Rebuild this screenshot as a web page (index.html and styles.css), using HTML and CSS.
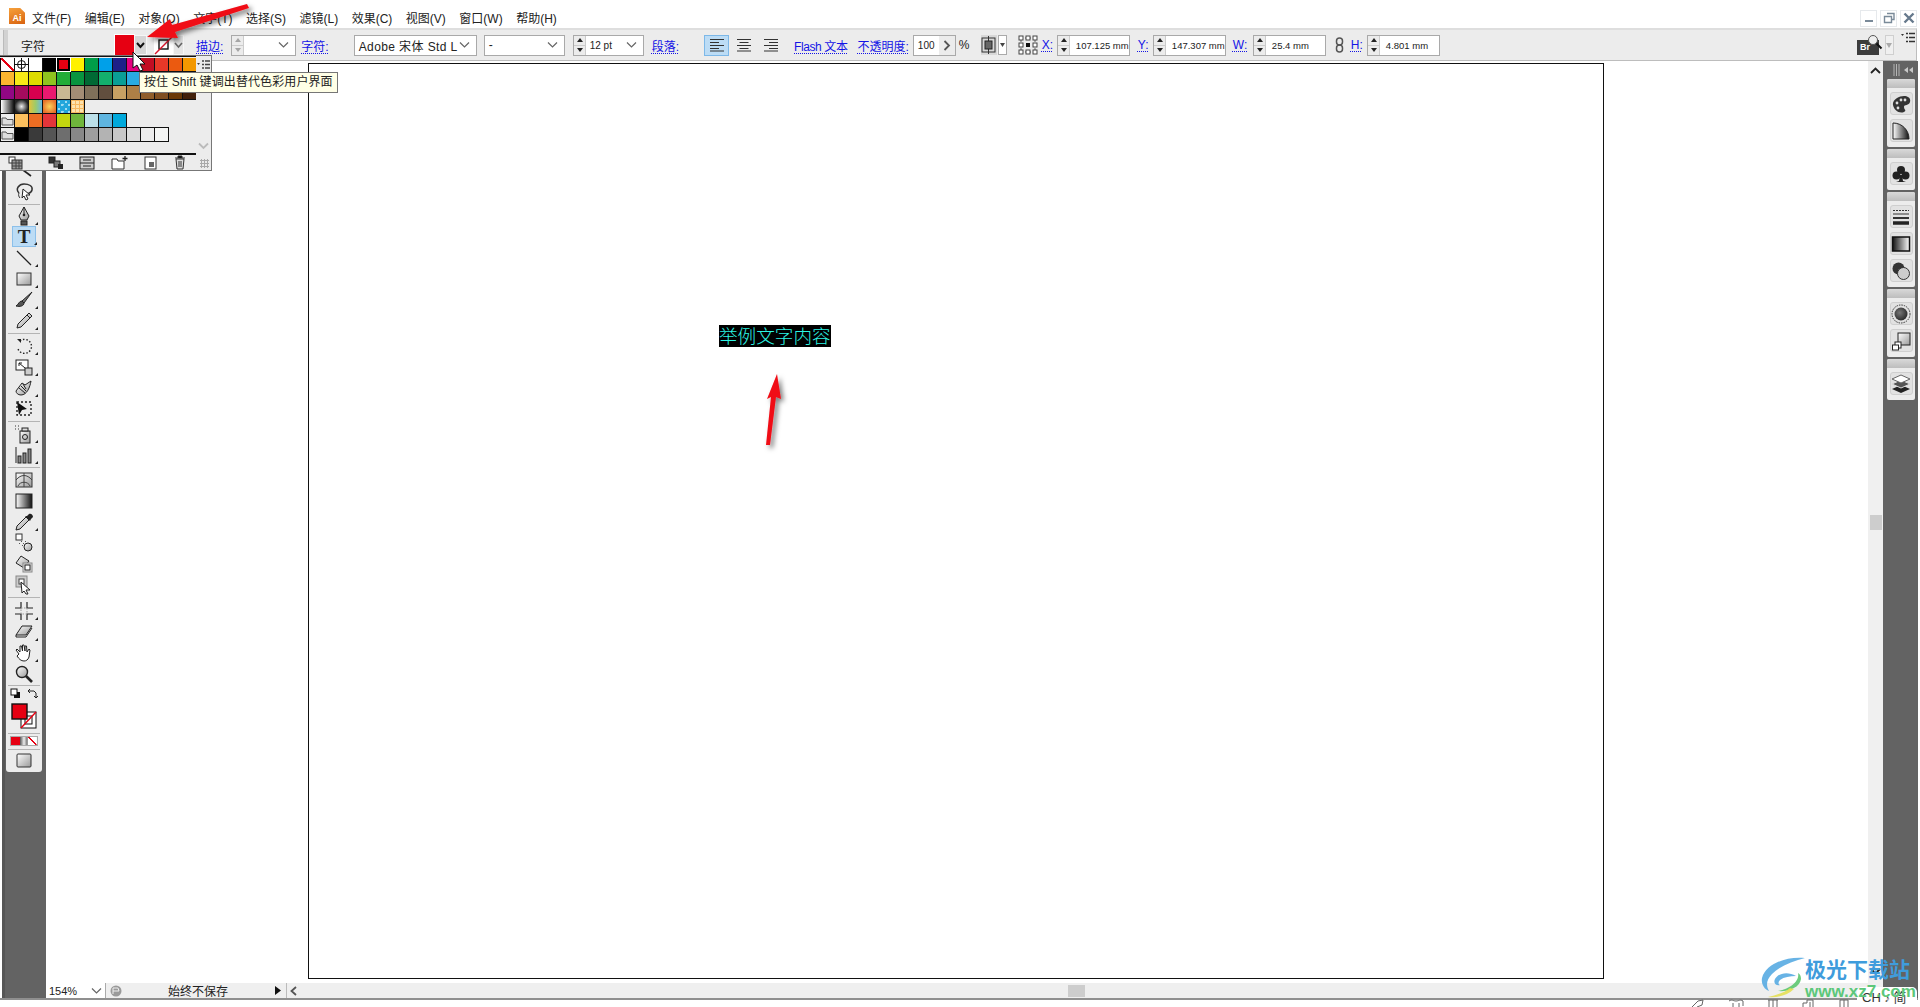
FILE: index.html
```html
<!doctype html>
<html lang="zh-CN">
  <head>
    <meta charset="utf-8" />
    <title>Adobe Illustrator</title>
    <link rel="stylesheet" href="styles.css">
  </head>

  <body>
    <svg class="defs" aria-hidden="true">
      <defs>
        <linearGradient id="g-soft" x1="0" y1="0" x2="1" y2="1">
          <stop offset="0" stop-color="#fff" /><stop offset="1" stop-color="#999" />
        </linearGradient>
        <linearGradient id="g-bw" x1="0" y1="0" x2="1" y2="0">
          <stop offset="0" stop-color="#fff" /><stop offset="1" stop-color="#111" />
        </linearGradient>
        <radialGradient id="g-ball" cx="0.4" cy="0.4" r="0.7">
          <stop offset="0" stop-color="#777" /><stop offset="1" stop-color="#222" />
        </radialGradient>
        <filter id="arrow-shadow" x="-40%" y="-40%" width="180%" height="180%">
          <feDropShadow dx="3" dy="3" stdDeviation="2.5" flood-color="#000" flood-opacity="0.5" />
        </filter>
      </defs>
    </svg>

    <!-- Title bar -->
    <header class="title-bar">
      <div class="app-icon">Ai</div>
      <nav class="menu">
        <span>文件(F)</span>
        <span>编辑(E)</span>
        <span>对象(O)</span>
        <span>文字(T)</span>
        <span>选择(S)</span>
        <span>滤镜(L)</span>
        <span>效果(C)</span>
        <span>视图(V)</span>
        <span>窗口(W)</span>
        <span>帮助(H)</span>
      </nav>
      <div class="win-buttons">
        <div class="win-btn"><svg width="16" height="16"><rect x="4" y="10" width="8" height="2" fill="#7a8a99" /></svg></div>
        <div class="win-btn"><svg width="16" height="16"><path d="M6 3.5h7v6h-2M3.5 6.5h7v6h-7z" fill="none" stroke="#7a8a99" stroke-width="1.4" /></svg></div>
        <div class="win-btn"><svg width="16" height="16"><path d="M3.5 3.5l9 9M12.5 3.5l-9 9" stroke="#66798c" stroke-width="2.4" /></svg></div>
      </div>
    </header>

    <!-- Control bar -->
    <section class="control-bar">
      <div class="grip"></div>
      <span class="selection-name">字符</span>
      <div class="fill-swatch"></div>
      <div class="mini-drop dark"><svg width="13" height="20"><path d="M3 8l3.5 4 3.5-4" fill="none" stroke="#111" stroke-width="2" /></svg></div>
      <div class="stroke-swatch">
        <svg width="19" height="20"><rect x="5" y="5" width="9" height="9" fill="#fff" stroke="#111" stroke-width="1.4" /><path d="M1 19L18 2" stroke="#d8142a" stroke-width="1.4" /></svg>
      </div>
      <div class="mini-drop"><svg width="11" height="20"><path d="M2 8l3.5 4 3.5-4" fill="none" stroke="#666" stroke-width="1.6" /></svg></div>

      <span class="link-label lbl-stroke">描边:</span>
      <div class="field stroke-field">
        <div class="spin faded"><i></i><i class="down"></i></div>
        <span class="field-text"></span>
        <svg class="chev" width="11" height="8"><path d="M1 1.5l4.5 4.5 4.5-4.5" fill="none" stroke="#666" stroke-width="1.2" /></svg>
      </div>
      <span class="link-label lbl-char">字符:</span>
      <div class="field font-field">
        <span class="field-text wide">Adobe 宋体 Std L</span>
        <svg class="chev" width="11" height="8"><path d="M1 1.5l4.5 4.5 4.5-4.5" fill="none" stroke="#666" stroke-width="1.2" /></svg>
      </div>
      <div class="field style-field">
        <span class="field-text">-</span>
        <svg class="chev" width="11" height="8"><path d="M1 1.5l4.5 4.5 4.5-4.5" fill="none" stroke="#666" stroke-width="1.2" /></svg>
      </div>
      <div class="field size-field">
        <div class="spin"><i></i><i class="down"></i></div>
        <span class="field-text small">12 pt</span>
        <svg class="chev" width="11" height="8"><path d="M1 1.5l4.5 4.5 4.5-4.5" fill="none" stroke="#666" stroke-width="1.2" /></svg>
      </div>

      <span class="link-label lbl-para">段落:</span>
      <div class="align-btn active first"><svg width="16" height="14"><path d="M1 1.5h14M1 4.5h9M1 7.5h14M1 10.5h9M1 13h14" stroke="#333" stroke-width="1.2" /></svg></div>
      <div class="align-btn"><svg width="16" height="14"><path d="M1 1.5h14M3.5 4.5h9M1 7.5h14M3.5 10.5h9M1 13h14" stroke="#333" stroke-width="1.2" /></svg></div>
      <div class="align-btn"><svg width="16" height="14"><path d="M1 1.5h14M6 4.5h9M1 7.5h14M6 10.5h9M1 13h14" stroke="#333" stroke-width="1.2" /></svg></div>

      <span class="link-label lbl-flash">Flash 文本</span>
      <span class="link-label lbl-opacity">不透明度:</span>
      <div class="field opacity-field">
        <span class="field-text small">100</span>
        <div class="opacity-arrow"><svg width="8" height="11"><path d="M1.5 1l4.5 4.5L1.5 10" fill="none" stroke="#555" stroke-width="1.8" /></svg></div>
      </div>
      <span class="percent">%</span>
      <div class="align-obj">
        <svg width="15" height="20"><path d="M7.5 1v18" stroke="#333" /><rect x="1" y="3" width="13" height="14" fill="none" stroke="#333" /><rect x="4" y="6" width="7" height="8" fill="#666" stroke="#222" /></svg>
      </div>
      <div class="mini-drop align-drop"><svg width="9" height="20"><path d="M2 8l2.5 4 2.5-4z" fill="#444" /></svg></div>
      <div class="ref-point">
        <svg width="20" height="20"><path d="M3 3h14v14H3z" fill="none" stroke="#666" stroke-dasharray="2 2" /><g fill="#fff" stroke="#444"><rect x="1" y="1" width="4" height="4" /><rect x="8" y="1" width="4" height="4" /><rect x="15" y="1" width="4" height="4" /><rect x="1" y="8" width="4" height="4" /><rect x="15" y="8" width="4" height="4" /><rect x="1" y="15" width="4" height="4" /><rect x="8" y="15" width="4" height="4" /><rect x="15" y="15" width="4" height="4" /></g><rect x="8" y="8" width="4" height="4" fill="#111" /></svg>
      </div>

      <span class="link-label lbl-x">X:</span>
      <div class="field num-field"><div class="spin"><i></i><i class="down"></i></div><span class="field-text num">107.125 mm</span></div>
      <span class="link-label lbl-y">Y:</span>
      <div class="field num-field"><div class="spin"><i></i><i class="down"></i></div><span class="field-text num">147.307 mm</span></div>
      <span class="link-label lbl-w">W:</span>
      <div class="field num-field"><div class="spin"><i></i><i class="down"></i></div><span class="field-text num">25.4 mm</span></div>
      <div class="chain"><svg width="9" height="16"><rect x="1.5" y="1" width="6" height="7" rx="3" fill="none" stroke="#555" stroke-width="1.5" /><rect x="1.5" y="8" width="6" height="7" rx="3" fill="none" stroke="#555" stroke-width="1.5" /></svg></div>
      <span class="link-label lbl-h">H:</span>
      <div class="field num-field"><div class="spin"><i></i><i class="down"></i></div><span class="field-text num">4.801 mm</span></div>

      <div class="bar-end">
        <div class="bridge">Br<svg width="16" height="16"><circle cx="6" cy="6" r="4.5" fill="#eee" stroke="#555" /><path d="M9.5 9.5l5 5" stroke="#111" stroke-width="2" /></svg></div>
        <div class="mini-drop bridge-drop"><svg width="8" height="20"><path d="M1 8l3 5 3-5z" fill="#aaa" /></svg></div>
        <div class="panel-menu"><svg width="14" height="12"><path d="M0 2h3L1.5 4z" fill="#333" /><path d="M5 1.5h9M5 5.5h9M5 9.5h9" stroke="#333" stroke-width="1.6" stroke-dasharray="2 1 8" /></svg></div>
      </div>
    </section>

    <!-- Workspace -->
    <div class="workspace">
      <aside class="tool-dock">
        <div class="tool-panel">
          <div class="tool"><svg width="20" height="20"><path d="M9 8l8 6" stroke="#222" stroke-width="1.6" /></svg></div>
          <div class="tool"><svg width="20" height="20"><g transform="translate(0 -2)"><path d="M5 12C1 8 5 3 10 3s9 2 8 6-6 4-9 3" fill="none" stroke="#333" stroke-width="1.5" /><path d="M9 8l7 6-4 0 2 4-2 1-2-4-2 2z" fill="#fff" stroke="#222" /><path d="M5 12c-1 2 0 4 1 5" fill="none" stroke="#333" /></g></svg></div>
          <div class="sep thin"></div>
          <div class="tool more"><svg width="20" height="20"><path d="M10 1l5 9-2 4H7l-2-4z" fill="url(#g-soft)" stroke="#222" /><path d="M10 1v7" stroke="#222" /><circle cx="10" cy="9" r="1.3" fill="#222" /><rect x="7" y="15" width="6" height="4" fill="#555" stroke="#222" /></svg></div>
          <div class="tool selected more"><span class="type-t">T</span></div>
          <div class="tool more"><svg width="20" height="20"><path d="M3 3l14 14" stroke="#222" stroke-width="1.3" /></svg></div>
          <div class="tool more"><svg width="20" height="20"><rect x="3" y="4" width="14" height="12" fill="url(#g-soft)" stroke="#333" /></svg></div>
          <div class="tool more"><svg width="20" height="20"><path d="M18 2L8 11l2 2z" fill="#777" stroke="#222" /><path d="M8 11c-3 0-3 3-6 5 4 1 8 0 8-3z" fill="#555" stroke="#222" /></svg></div>
          <div class="tool more"><svg width="20" height="20"><path d="M15 2l3 3L7 16l-4 1 1-4z" fill="url(#g-soft)" stroke="#222" /><path d="M13 4l3 3" stroke="#222" /></svg></div>
          <div class="sep"></div>
          <div class="tool more"><svg width="20" height="20"><path d="M6 5a7 7 0 1 1-2 8" fill="none" stroke="#222" stroke-width="1.4" stroke-dasharray="1.5 1.8" /><path d="M3 3l4 0 0 4z" fill="#222" /></svg></div>
          <div class="tool more"><svg width="20" height="20"><rect x="2" y="3" width="12" height="10" fill="#fff" stroke="#222" /><rect x="11" y="11" width="7" height="7" fill="#ccc" stroke="#222" /><path d="M5 6l6 5M5 6h3M5 6v3" stroke="#222" /></svg></div>
          <div class="tool more"><svg width="20" height="20"><path d="M17 3c-1 6-4 14-10 14-3 0-5-2-5-4l6-8 3 2z" fill="url(#g-soft)" stroke="#222" /><path d="M5 10l6 5M7 8l5 5M9 6l3 5" stroke="#222" /></svg></div>
          <div class="tool"><svg width="20" height="20"><path d="M3 3h14v13H3z" fill="none" stroke="#222" stroke-width="1.4" stroke-dasharray="2 2" /><path d="M3 3l10 7-5 1-3 5z" fill="#111" /></svg></div>
          <div class="sep"></div>
          <div class="tool more"><svg width="20" height="20"><rect x="6" y="7" width="10" height="12" fill="url(#g-soft)" stroke="#222" /><circle cx="11" cy="13" r="2.5" fill="none" stroke="#222" /><rect x="8" y="4" width="6" height="3" fill="#ddd" stroke="#222" /><path d="M1 2h1M4 2h1M1 5h1M4 5h1" stroke="#333" /></svg></div>
          <div class="tool more"><svg width="20" height="20"><path d="M2 2v16" stroke="#222" /><rect x="4" y="11" width="3" height="7" fill="#888" stroke="#222" /><rect x="9" y="8" width="3" height="10" fill="#888" stroke="#222" /><rect x="14" y="4" width="3" height="14" fill="#888" stroke="#222" /></svg></div>
          <div class="sep"></div>
          <div class="tool"><svg width="20" height="20"><rect x="2" y="3" width="16" height="14" fill="url(#g-soft)" stroke="#333" /><path d="M2 10c5-6 11-6 16 0M10 3v14M4 16c2-5 10-5 12 0" fill="none" stroke="#444" /></svg></div>
          <div class="tool"><svg width="20" height="20"><rect x="2" y="3" width="16" height="14" fill="url(#g-bw)" stroke="#222" /></svg></div>
          <div class="tool more"><svg width="20" height="20"><path d="M12 5l3 3-9 9-4 1 1-4z" fill="url(#g-soft)" stroke="#222" /><path d="M11 4l5 5 1-2 2-2c0-2-2-4-4-3l-2 2z" fill="#222" /></svg></div>
          <div class="tool"><svg width="20" height="20"><rect x="2" y="1" width="6" height="6" fill="#fff" stroke="#333" /><circle cx="14" cy="14" r="4" fill="url(#g-soft)" stroke="#222" /><path d="M7 8l1 1M9 10l1 1M5 10l1 1M11 8l1 1M8 12l1 1" stroke="#555" /></svg></div>
          <div class="tool"><svg width="20" height="20"><path d="M7 2l8 5-5 7-8-5z" fill="url(#g-soft)" stroke="#222" /><rect x="9" y="9" width="9" height="9" fill="#ddd" stroke="#888" /><rect x="11" y="11" width="5" height="5" fill="#fff" stroke="#222" /></svg></div>
          <div class="tool"><svg width="20" height="20"><rect x="2" y="1" width="11" height="11" fill="#ccc" stroke="#888" /><rect x="5" y="4" width="5" height="5" fill="#fff" stroke="#444" /><path d="M7 7l9 8-4 0 2 4-2 0-2-3-2 2z" fill="#fff" stroke="#222" /></svg></div>
          <div class="sep wide"></div>
          <div class="tool more"><svg width="20" height="20"><path d="M7 1v6H1M13 1v6h6M7 19v-6H1M13 19v-6h6" fill="none" stroke="#222" stroke-width="1.2" /><rect x="7" y="7" width="6" height="6" fill="none" stroke="#999" stroke-dasharray="1.5 1.5" /></svg></div>
          <div class="tool more"><svg width="20" height="20"><path d="M8 4h10l-6 9H2z" fill="url(#g-soft)" stroke="#222" /><path d="M2 13l0 2h10l6-9" fill="none" stroke="#222" /></svg></div>
          <div class="tool more"><svg width="20" height="20"><path d="M5 11L2 7l1-1 3 3V3h1.5l1 5V2h1.5l1 6V3h1.5l.5 6 2-3 1 1-1 7c-1 3-3 4-5 4-3 0-5-2-7-5z" fill="#fff" stroke="#222" /></svg></div>
          <div class="tool"><svg width="20" height="20"><circle cx="8" cy="8" r="5.5" fill="url(#g-soft)" stroke="#222" stroke-width="1.4" /><path d="M12 12l6 6" stroke="#222" stroke-width="2.6" /></svg></div>
          <div class="sep thin"></div>

          <div class="color-mini">
            <svg width="11" height="11"><rect x="4" y="4" width="6" height="6" fill="#111" /><rect x="1" y="1" width="6" height="6" fill="#fff" stroke="#111" /></svg>
            <svg width="11" height="11"><path d="M1 3h6l2 2v5M9 10L7 8M9 10l2-2M1 3l2-2M1 3l2 2" fill="none" stroke="#222" /></svg>
          </div>
          <div class="fill-stroke">
            <svg width="26" height="26">
              <rect x="10" y="9" width="15" height="16" fill="#fff" stroke="#111" />
              <rect x="14" y="13" width="7" height="8" fill="none" stroke="#111" />
              <path d="M10 25L25 9" stroke="#e60012" stroke-width="1.5" />
              <rect x="1" y="1" width="15" height="15" fill="#e60012" stroke="#111" stroke-width="1.4" />
            </svg>
          </div>
          <div class="sep mode-sep"></div>
          <div class="color-modes"><i class="mode-red"></i><i class="mode-grad"></i><i class="mode-none"></i></div>
          <div class="sep mode-sep last"></div>
          <div class="tool"><svg width="20" height="20"><rect x="3" y="3" width="14" height="13" rx="1" fill="url(#g-soft)" stroke="#333" /></svg></div>
        </div>
      </aside>

      <div class="center-col">
        <div class="canvas-row">
          <main class="canvas">
            <div class="artboard">
              <span class="sample-text">举例文字内容</span>
            </div>
          </main>
          <div class="v-scroll">
            <svg width="11" height="7"><path d="M1 6l4.5-4.5L10 6" fill="none" stroke="#222" stroke-width="1.8" /></svg>
            <div class="v-thumb"></div>
            <svg width="11" height="7"><path d="M1 1l4.5 4.5L10 1" fill="none" stroke="#222" stroke-width="1.8" /></svg>
          </div>
        </div>
        <footer class="status-bar">
          <div class="zoom-select">
            <span>154%</span>
            <svg width="11" height="8"><path d="M1 1.5l4.5 4.5 4.5-4.5" fill="none" stroke="#666" stroke-width="1.2" /></svg>
          </div>
          <div class="artboard-icon"><svg width="12" height="12"><circle cx="6" cy="6" r="5.5" fill="#9a9a9a" /><path d="M3 9V3h5l1 3H3" fill="none" stroke="#eee" /></svg></div>
          <span class="status-text">始终不保存</span>
          <svg class="status-arrow" width="6" height="9"><path d="M0 0l6 4.5L0 9z" fill="#111" /></svg>
          <div class="h-track">
            <svg width="7" height="10"><path d="M6 1L1.5 5 6 9" fill="none" stroke="#555" stroke-width="1.8" /></svg>
            <div class="h-thumb"></div>
          </div>
        </footer>
      </div>

      <aside class="panel-dock">
        <div class="dock-head">
          <svg width="28" height="14"><path d="M7 1v12M9.5 1v12M12 1v12" stroke="#b5b5b5" /><path d="M21 4l-4 3 4 3zM26 4l-4 3 4 3z" fill="#c8c8c8" /></svg>
        </div>
        <div class="dock-group">
          <div class="dock-bar"></div>
          <div class="dock-btn"><svg width="20" height="18"><path d="M2 10C1 5 8 1 13 1c4 0 7 2 6 6s-6 2-6 5 3 3 0 5c-5 2-10-2-11-7z" fill="#333" /><circle cx="6" cy="8" r="1.4" fill="#ddd" /><circle cx="10" cy="5" r="1.4" fill="#ddd" /><circle cx="14" cy="5" r="1.4" fill="#ddd" /><circle cx="7" cy="13" r="1.4" fill="#ddd" /></svg></div>
          <div class="dock-btn"><svg width="20" height="20"><path d="M2 2c9 0 16 7 16 16H2z" fill="url(#g-bw)" stroke="#222" /></svg></div>
        </div>
        <div class="dock-group">
          <div class="dock-bar"></div>
          <div class="dock-btn"><svg width="20" height="20"><circle cx="10" cy="6" r="4" fill="#222" /><circle cx="5.5" cy="11.5" r="4" fill="#222" /><circle cx="14.5" cy="11.5" r="4" fill="#222" /><path d="M9 11h2l1 6 3 1H5l3-1z" fill="#222" /></svg></div>
        </div>
        <div class="dock-group">
          <div class="dock-bar"></div>
          <div class="dock-btn"><svg width="20" height="18"><path d="M2 2.5h16" stroke="#333" stroke-dasharray="2 1" /><path d="M2 6h16" stroke="#333" /><path d="M2 10h16" stroke="#333" stroke-width="2" /><path d="M2 15h16" stroke="#222" stroke-width="3.5" /></svg></div>
          <div class="dock-btn"><svg width="20" height="18"><rect x="1.5" y="2" width="17" height="14" fill="url(#g-bw)" stroke="#111" stroke-width="1.5" transform="rotate(180 10 9)" /></svg></div>
          <div class="dock-btn"><svg width="20" height="20"><circle cx="7.5" cy="7.5" r="6" fill="#333" /><circle cx="12.5" cy="12.5" r="6" fill="#ccc" stroke="#333" /></svg></div>
        </div>
        <div class="dock-group">
          <div class="dock-bar"></div>
          <div class="dock-btn"><svg width="20" height="20"><circle cx="10" cy="10" r="9" fill="none" stroke="#333" stroke-dasharray="1.5 1" /><circle cx="10" cy="10" r="6.5" fill="url(#g-ball)" /></svg></div>
          <div class="dock-btn"><svg width="20" height="20"><rect x="7" y="2" width="12" height="12" fill="url(#g-soft)" stroke="#222" /><rect x="4" y="11" width="6" height="6" fill="#fff" stroke="#222" /><rect x="1.5" y="14" width="6" height="5" fill="#fff" stroke="#222" /></svg></div>
        </div>
        <div class="dock-group">
          <div class="dock-bar"></div>
          <div class="dock-btn"><svg width="20" height="20"><path d="M10 11l9 4-9 4-9-4z" fill="#222" /><path d="M10 6l9 4-9 4-9-4z" fill="#555" stroke="#ddd" /><path d="M10 1l9 4-9 4-9-4z" fill="#fff" stroke="#666" /></svg></div>
        </div>
      </aside>
    </div>

    <!-- Swatches pop-up from the fill control -->
    <div class="swatch-panel">
      <div class="swatch-main">
        <div class="swatch-list">
          <div class="swatch-row full">
            <i class="cell-none"></i>
            <i class="cell-reg"><svg width="13" height="13"><circle cx="6.5" cy="6.5" r="4" fill="none" stroke="#111" /><path d="M6.5 0v13M0 6.5h13" stroke="#111" /></svg></i>
            <i style="background:#fff"></i><i style="background:#000"></i><i class="cell-current"></i>
            <i style="background:#fff100"></i><i style="background:#009e49"></i><i style="background:#00a0e9"></i>
            <i style="background:#1d2088"></i><i style="background:#e4007f"></i><i style="background:#c30d23"></i>
            <i style="background:#e83828"></i><i style="background:#eb5a10"></i><i style="background:#f39800"></i>
          </div>
          <div class="swatch-row full">
            <i style="background:#fbb62f"></i><i style="background:#f7ea16"></i><i style="background:#dedc00"></i>
            <i style="background:#8fc31f"></i><i style="background:#22ac38"></i><i style="background:#08943f"></i>
            <i style="background:#006934"></i><i style="background:#13b06d"></i><i style="background:#0a9e96"></i>
            <i style="background:#29abe2"></i><i style="background:#0068b7"></i><i style="background:#1d2088"></i>
            <i style="background:#601986"></i><i style="background:#920783"></i>
          </div>
          <div class="swatch-row full">
            <i style="background:#920783"></i><i style="background:#a40b5d"></i><i style="background:#d7004f"></i>
            <i style="background:#e8196f"></i><i style="background:#c9b893"></i><i style="background:#a38d75"></i>
            <i style="background:#7f705a"></i><i style="background:#614e3e"></i><i style="background:#c7a063"></i>
            <i style="background:#ad7f46"></i><i style="background:#8f5e2b"></i><i style="background:#7f4f21"></i>
            <i style="background:#6a3906"></i><i style="background:#42210b"></i>
          </div>
          <div class="swatch-row">
            <i class="grad-linear"></i><i class="grad-radial"></i><i class="grad-rainbow"></i>
            <i class="grad-orange"></i><i class="pat-blue"></i><i class="pat-tan"></i>
          </div>
          <div class="swatch-row boxed">
            <i class="cell-folder"><svg width="13" height="13"><path d="M1 11V4h4l1 1.5h6V11z" fill="#ddd" stroke="#555" /></svg></i>
            <i style="background:#fcc05e"></i><i style="background:#ec6d23"></i><i style="background:#e4353a"></i>
            <i style="background:#c3d60f"></i><i style="background:#6fb63c"></i><i style="background:#bce0e9"></i>
            <i style="background:#5fb5e0"></i><i style="background:#00a9dc"></i>
          </div>
          <div class="swatch-row boxed">
            <i class="cell-folder"><svg width="13" height="13"><path d="M1 11V4h4l1 1.5h6V11z" fill="#ddd" stroke="#555" /></svg></i>
            <i style="background:#000"></i><i style="background:#3a3a3a"></i><i style="background:#555"></i>
            <i style="background:#6e6e6e"></i><i style="background:#888"></i><i style="background:#9e9e9e"></i>
            <i style="background:#b3b3b3"></i><i style="background:#c8c8c8"></i><i style="background:#dcdcdc"></i>
            <i style="background:#ececec"></i><i style="background:#f4f5f4"></i>
          </div>
        </div>
        <div class="swatch-side">
          <svg width="14" height="12"><path d="M0 4h3L1.5 6z" fill="#444" /><path d="M5 2h8M5 5.5h8M5 9h8" stroke="#444" stroke-width="1.5" stroke-dasharray="2 1 6" /></svg>
          <svg width="11" height="8"><path d="M1 1.5l4.5 4.5L10 1.5" fill="none" stroke="#bbb" stroke-width="1.8" /></svg>
        </div>
      </div>
      <div class="swatch-foot">
        <svg width="16" height="14"><rect x="1" y="1" width="6" height="6" fill="#fff" stroke="#333" /><rect x="4" y="4" width="10" height="9" fill="#999" stroke="#333" /><path d="M4 7h10M4 10h10M8 4v9M11 4v9" stroke="#444" /></svg>
        <svg width="16" height="14"><rect x="1" y="1" width="6" height="6" fill="#333" stroke="#222" /><rect x="6" y="5" width="6" height="6" fill="#777" stroke="#222" /><rect x="10" y="8" width="5" height="5" fill="#222" /></svg>
        <svg width="16" height="14"><rect x="1" y="1" width="14" height="12" fill="#ccc" stroke="#222" /><path d="M1 7h14M4 4h8M4 10h8" stroke="#222" /></svg>
        <svg width="17" height="14"><path d="M1 13V3h5l1 2h6v8z" fill="#fff" stroke="#333" /><path d="M14 0v5M11.5 2.5h5" stroke="#222" stroke-width="1.3" /></svg>
        <svg width="14" height="14"><rect x="2" y="1" width="11" height="12" fill="#fff" stroke="#333" /><rect x="6" y="6" width="5" height="5" fill="#666" /></svg>
        <svg width="14" height="15"><path d="M3 4h8l-1 10H4z" fill="#ddd" stroke="#333" /><path d="M2 3h10M5 3V1h4v2M6 6v6M8 6v6" stroke="#333" /></svg>
      </div>
    </div>

    <div class="tip">按住 Shift 键调出替代色彩用户界面</div>

    <!-- Red annotation arrows and the pointer -->
    <svg class="annotate" width="1920" height="1007" aria-hidden="true">
      <g filter="url(#arrow-shadow)" fill="#f00a14">
        <path d="M147 37L170 19 172 25 247 4 249 8 175 32 178 38z" />
        <path d="M777 374L781 399 776 397 770 445 766 445 771 397 767 399z" />
      </g>
      <path d="M133 52L133 68 137 65 140 71 143 70 140 64 145 64z" fill="#fff" stroke="#111" />
    </svg>

    <!-- Taskbar peeking in at the bottom -->
    <div class="tray-icons">
      <svg width="14" height="8"><path d="M1 8l6-6 5-1-1 5-5 2" fill="none" stroke="#666" /></svg>
      <svg width="16" height="8"><path d="M1 2c3-2 4 0 7 0s4-2 7 0v5" fill="none" stroke="#666" /><path d="M5 4v4M11 4v4" stroke="#666" /></svg>
      <svg width="12" height="8"><path d="M1 1h10M2 1v7M6 1v7M10 1v7" stroke="#666" fill="none" /></svg>
      <svg width="14" height="8"><path d="M1 8V4h4V1h6v7M8 3v5" stroke="#666" fill="none" /></svg>
      <svg width="12" height="8"><path d="M1 8V1h8v7M5 1v7" stroke="#666" fill="none" /></svg>
    </div>
    <div class="ime-tray">CH <span class="ime-moon">♪</span> 简</div>

    <!-- Watermark -->
    <div class="watermark">
      <svg class="wm-logo" width="46" height="42">
        <path d="M45 2C26 0 6 8 2 22c-1 6 2 11 7 13-3-5-3-11 3-17C20 10 33 5 45 2z" fill="#4da6e0" opacity="0.85" />
        <path d="M36 20c-8-5-18-3-21 3-2 4 1 7 5 6-2-1-2-3 0-5 4-3 10-4 16-4z" fill="#4da6e0" opacity="0.85" />
        <path d="M38 17c2 8-8 16-20 18 9 1 22-3 23-12 0-3-1-5-3-6z" fill="#5cc76f" opacity="0.9" />
        <path d="M30 32C24 37 16 39 8 41c10 1 20-2 26-8z" fill="#e4df55" opacity="0.9" />
      </svg>
      <div class="wm-title">极光下载站</div>
      <div class="wm-url">www.xz7.com</div>
    </div>
  </body>
</html>
```

FILE: styles.css
```css
* {
  box-sizing: border-box;
}

html,
body {
  height: 100%;
}

body {
  margin: 0;
  width: 1920px;
  height: 1007px;
  overflow: hidden;
  position: relative;
  display: flex;
  flex-direction: column;
  background-color: #fff;
  color: #222;
  font-family: "Liberation Sans", "Noto Sans CJK SC", sans-serif;
  font-size: 12px;
}

i {
  display: block;
}

svg {
  display: block;
  flex: none;
}

.defs {
  position: absolute;
  width: 0;
  height: 0;
}

/* title bar */
.title-bar {
  height: 28px;
  flex: none;
  display: flex;
  align-items: center;
  padding-left: 9px;
  background-color: #fff;
}

.app-icon {
  width: 16px;
  height: 16px;
  margin-top: 4px;
  padding-top: 4px;
  background: linear-gradient(160deg, #f6a13c, #d8620f);
  clip-path: polygon(0 0, 70% 0, 100% 30%, 100% 100%, 0 100%);
  color: #fff;
  font-size: 9px;
  font-weight: bold;
  line-height: 12px;
  text-align: center;
}

.menu {
  display: flex;
  gap: 13.5px;
  margin-left: 7px;
  margin-top: 6px;
}

.win-buttons {
  display: flex;
  gap: 3px;
  margin-left: auto;
  margin-right: 3px;
  margin-top: 8px;
}

.win-btn {
  width: 17px;
  height: 17px;
  border: 1px solid #e6e9ec;
  display: flex;
  align-items: center;
  justify-content: center;
}

/* control bar */
.control-bar {
  height: 33px;
  flex: none;
  width: 1917px;
  display: flex;
  align-items: center;
  background-color: #ececec;
  border-top: 2px solid #dedede;
  border-bottom: 1px solid #bdbdbd;
  border-right: 1px solid #bdbdbd;
}

.grip {
  width: 5px;
  height: 30px;
  margin-left: 3px;
  background-color: #d2d2d2;
  border-left: 1px solid #bbb;
}

.selection-name {
  margin-left: 13px;
  width: 24px;
  flex: none;
}

.fill-swatch {
  width: 19px;
  height: 20px;
  margin-left: 70px;
  background-color: #e60012;
  box-shadow: 0 0 0 1px #fff;
}

.mini-drop {
  width: 11px;
  height: 20px;
  background-color: #e4e4e4;
  box-shadow: inset 0 0 0 1px #f6f6f6;
}

.mini-drop.dark {
  width: 13px;
  background-color: #d6d6d6;
}

.stroke-swatch {
  width: 19px;
  height: 20px;
  margin-left: 7px;
  background-color: #fff;
}

.link-label {
  flex: none;
  color: #1414e6;
  text-decoration: underline dotted;
  text-underline-offset: 2px;
  white-space: nowrap;
}

.lbl-stroke { margin-left: 12px; }
.lbl-char { margin-left: 5px; }
.lbl-para { margin-left: 8px; }
.lbl-flash { margin-left: 11px; letter-spacing: -0.4px; }
.lbl-opacity { margin-left: 10px; }
.lbl-x { margin-left: 4px; width: 13px; }
.lbl-y { margin-left: 8px; width: 13px; }
.lbl-w { margin-left: 7px; width: 18px; }
.lbl-h { margin-left: 7px; width: 14px; }

.field {
  flex: none;
  height: 21px;
  display: flex;
  align-items: center;
  background-color: #fff;
  border: 1px solid #a9a9a9;
  position: relative;
}

.field-text {
  padding-left: 4px;
  white-space: nowrap;
}

.field-text.wide {
  letter-spacing: 0.4px;
}

.field-text.small {
  font-size: 10px;
}

.field-text.num {
  font-size: 9.5px;
  padding-left: 6px;
}

.chev {
  margin-left: auto;
  margin-right: 6px;
}

.spin {
  width: 12px;
  height: 19px;
  flex: none;
  display: flex;
  flex-direction: column;
  background-color: #ececec;
  border-right: 1px solid #ccc;
}

.spin i {
  flex: 1;
  position: relative;
  border-bottom: 1px solid #ccc;
}

.spin i::after {
  content: "";
  position: absolute;
  left: 3px;
  top: 2px;
  border-left: 3px solid transparent;
  border-right: 3px solid transparent;
  border-bottom: 4px solid #222;
}

.spin i.down {
  border-bottom: none;
}

.spin i.down::after {
  border-bottom: none;
  border-top: 4px solid #222;
}

.spin.faded i::after {
  opacity: 0.35;
}

.stroke-field { width: 65px; margin-left: 8px; }
.font-field { width: 123px; margin-left: 25px; }
.style-field { width: 81px; margin-left: 7px; }
.size-field { width: 71px; margin-left: 8px; }
.opacity-field { width: 43px; margin-left: 4px; }
.num-field { width: 73px; margin-left: 2px; }

.opacity-arrow {
  width: 16px;
  height: 19px;
  margin-left: auto;
  display: flex;
  align-items: center;
  justify-content: center;
  background-color: #ececec;
}

.align-btn {
  width: 25px;
  height: 21px;
  margin-left: 2px;
  display: flex;
  align-items: center;
  justify-content: center;
  border: 1px solid transparent;
}

.align-btn.first {
  margin-left: 25px;
}

.align-btn.active {
  background-color: #bcdcf5;
  border-color: #7db8e8;
}

.percent {
  margin-left: 3px;
  width: 12px;
  flex: none;
}

.align-obj {
  margin-left: 10px;
  width: 16px;
  height: 20px;
  background-color: #d8d8d8;
}

.align-drop {
  width: 9px;
  margin-left: 1px;
  background-color: #fff;
  box-shadow: inset 0 0 0 1px #aaa;
}

.ref-point {
  margin-left: 11px;
}

.chain {
  margin-left: 9px;
  width: 9px;
}

.bar-end {
  margin-left: auto;
  display: flex;
  align-items: center;
  margin-right: 1px;
}

.bridge {
  width: 22px;
  height: 15px;
  margin-top: 4px;
  padding-left: 3px;
  background-color: #3c3c3c;
  color: #fff;
  font-size: 9px;
  font-weight: bold;
  line-height: 15px;
  position: relative;
}

.bridge svg {
  position: absolute;
  left: 10px;
  top: -6px;
}

.bridge-drop {
  width: 9px;
  margin-left: 6px;
  background-color: #f0f0f0;
  box-shadow: inset 0 0 0 1px #cfcfcf;
}

.panel-menu {
  margin-left: 7px;
  width: 14px;
  height: 26px;
}

/* workspace */
.workspace {
  height: 939px;
  flex: none;
  width: 1918px;
  display: flex;
  border-bottom: 2px solid #8f8f8f;
}

.tool-dock {
  width: 46px;
  flex: none;
  padding-left: 6px;
  background-color: #636363;
  border-left: 2px solid #fff;
  box-shadow: inset 3px 0 0 #565656;
}

.tool-panel {
  width: 36px;
  height: 711px;
  margin-left: -2px;
  padding-top: 100px;
  background-color: #ececec;
  border-radius: 0 0 3px 3px;
}

.tool {
  width: 24px;
  height: 21px;
  margin: 0 auto;
  display: flex;
  align-items: center;
  justify-content: center;
  position: relative;
}

.tool.more::after {
  content: "";
  position: absolute;
  right: -2px;
  bottom: 1px;
  border-left: 3px solid transparent;
  border-bottom: 3px solid #222;
}

.tool.selected {
  background-color: #bcdcf5;
  border: 1px solid #8cc0ea;
}

.type-t {
  font-family: "Liberation Serif", serif;
  font-size: 19px;
  font-weight: bold;
  line-height: 19px;
}

.sep {
  height: 1px;
  margin: 2px 2px 1px;
  background-color: #b4b4b4;
}

.sep.thin {
  margin: 1px 2px 0;
}

.sep.wide {
  margin: 2px 2px 2px;
}

.sep.mode-sep {
  margin: 4px 2px 2px;
}

.sep.mode-sep.last {
  margin: 3px 2px 0;
}

.color-mini {
  display: flex;
  justify-content: space-between;
  padding: 2px 4px 0;
}

.fill-stroke {
  padding: 4px 0 0 11px;
  margin-left: -6px;
}

.color-modes {
  display: flex;
  width: 28px;
  height: 10px;
  margin: 1px auto;
  border: 1px solid #aaa;
}

.color-modes i {
  flex: 1;
}

.mode-red {
  background-color: #e60012;
}

.mode-grad {
  background: linear-gradient(90deg, #555, #eee, #555);
}

.mode-none {
  background: linear-gradient(135deg, #fff 44%, #e60012 45%, #e60012 55%, #fff 56%);
  transform: scaleX(-1);
}

/* canvas */
.center-col {
  flex: 1;
  min-width: 0;
  display: flex;
  flex-direction: column;
}

.canvas-row {
  flex: 1;
  min-height: 0;
  display: flex;
}

.canvas {
  flex: 1;
  background-color: #fff;
  padding: 2px 0 0 262px;
}

.artboard {
  width: 1296px;
  height: 916px;
  border: 1.5px solid #111;
  position: relative;
}

.sample-text {
  position: absolute;
  left: 410px;
  top: 261px;
  width: 112px;
  height: 22px;
  background-color: #000;
  color: #2cf5e4;
  font-family: "Noto Sans CJK SC", sans-serif;
  font-size: 18.6px;
  font-weight: 300;
  line-height: 20px;
  white-space: nowrap;
}

.v-scroll {
  width: 15px;
  flex: none;
  display: flex;
  flex-direction: column;
  align-items: center;
  justify-content: space-between;
  padding: 6px 0 8px;
  background-color: #f0f0f0;
}

.v-thumb {
  width: 12px;
  height: 15px;
  margin-top: 2px;
  background-color: #cdcdcd;
}

.status-bar {
  height: 15px;
  flex: none;
  display: flex;
  align-items: center;
  background-color: #efefef;
}

.zoom-select {
  width: 60px;
  height: 15px;
  display: flex;
  align-items: center;
  justify-content: space-between;
  padding: 0 3px;
  background-color: #fff;
  border-right: 1px solid #aaa;
  font-size: 11px;
}

.artboard-icon {
  margin-left: 4px;
}

.status-text {
  margin-left: 46px;
  width: 60px;
  white-space: nowrap;
}

.status-arrow {
  margin-left: 47px;
}

.h-track {
  flex: 1;
  height: 15px;
  margin-left: 5px;
  padding-left: 3px;
  display: flex;
  align-items: center;
  border-left: 1px solid #bbb;
}

.h-thumb {
  width: 17px;
  height: 12px;
  margin-left: 771px;
  background-color: #cdcdcd;
}

/* right panel dock */
.panel-dock {
  width: 35px;
  flex: none;
  padding: 0 3px 0 4px;
  background-color: #636363;
  display: flex;
  flex-direction: column;
  gap: 2px;
}

.dock-head {
  height: 16px;
  padding-top: 2px;
}

.dock-group {
  background-color: #ececec;
  border-radius: 2px;
  padding-bottom: 4px;
}

.dock-bar {
  height: 9px;
  margin-bottom: 4px;
  background: linear-gradient(#d9d9d9, #bdbdbd);
  border-radius: 2px 2px 0 0;
}

.dock-btn {
  width: 23px;
  height: 23px;
  margin: 0 auto 4px;
  display: flex;
  align-items: center;
  justify-content: center;
  background-color: #e2e2e2;
  border: 1px solid #cfcfcf;
  border-radius: 3px;
}

.dock-btn:last-child {
  margin-bottom: 1px;
}

/* swatches pop-up */
.swatch-panel {
  position: absolute;
  left: 0;
  top: 55px;
  width: 212px;
  height: 116px;
  display: flex;
  flex-direction: column;
  background-color: #ececec;
  border: 1px solid #777;
  border-left: none;
}

.swatch-panel::after {
  content: "";
  position: absolute;
  right: 2px;
  bottom: 2px;
  width: 9px;
  height: 9px;
  background-image: radial-gradient(circle, #aaa 1px, transparent 1.2px);
  background-size: 3px 3px;
}

.swatch-main {
  height: 99px;
  flex: none;
  display: flex;
}

.swatch-list {
  width: 196px;
  flex: none;
  padding-top: 1px;
  background-color: #ececec;
  border-top: 1px solid #111;
  border-bottom: 2px solid #111;
}

.swatch-row {
  display: flex;
  width: fit-content;
  gap: 1px;
  padding: 0 1px 1px 1px;
  background-color: #111;
}

.swatch-row.full {
  padding-right: 0;
  width: 196px;
}

.swatch-row.boxed {
  padding-top: 1px;
  margin-top: -1px;
}

.swatch-row i {
  width: 13px;
  height: 13px;
  flex: none;
}

.cell-none {
  background: linear-gradient(135deg, #fff 43%, #e60012 44%, #e60012 56%, #fff 57%);
  transform: scaleX(-1);
}

.cell-folder {
  background-color: #ececec;
}

.cell-reg {
  background-color: #fff;
}

.cell-current {
  background-color: #e60012;
  border: 2px solid #000;
  box-shadow: 0 0 0 1px #fff;
}

.grad-linear {
  background: linear-gradient(90deg, #fff, #111);
}

.grad-radial {
  background: radial-gradient(circle, #eee, #222 75%);
}

.grad-rainbow {
  background: linear-gradient(90deg, #e4c23c, #9dcb6a, #6cb8e0);
}

.grad-orange {
  background: radial-gradient(circle, #fcd25a, #e8702a 80%);
}

.pat-blue {
  background-color: #22a6dc;
  background-image: radial-gradient(circle at 30% 30%, #9fdcf2 18%, transparent 20%),
    radial-gradient(circle at 75% 70%, #9fdcf2 18%, transparent 20%);
  background-size: 7px 7px;
}

.pat-tan {
  background-color: #fde2ae;
  background-image: linear-gradient(#f8b860 1px, transparent 1px),
    linear-gradient(90deg, #f8b860 1px, transparent 1px);
  background-size: 4px 4px;
}

.swatch-side {
  flex: 1;
  display: flex;
  flex-direction: column;
  align-items: center;
  justify-content: space-between;
  padding: 3px 0 5px;
}

.swatch-foot {
  flex: 1;
  display: flex;
  align-items: center;
  padding: 0 24px 0 8px;
  justify-content: space-between;
}

.swatch-foot svg:nth-child(2) {
  margin-left: 8px;
}

.tip {
  position: absolute;
  left: 139px;
  top: 72px;
  height: 21px;
  padding: 0 4px;
  background-color: #ffffe6;
  border: 1px solid #767676;
  line-height: 19px;
  white-space: nowrap;
  letter-spacing: 0.1px;
}

.annotate {
  position: absolute;
  left: 0;
  top: 0;
  pointer-events: none;
}

/* watermark and taskbar corner */
.watermark {
  position: absolute;
  left: 1760px;
  top: 956px;
  width: 160px;
  height: 46px;
}

.wm-logo {
  position: absolute;
  left: 0;
  top: 0;
}

.wm-title {
  position: absolute;
  left: 45px;
  top: -1px;
  color: #3f9cdc;
  font-family: "Noto Sans CJK SC", sans-serif;
  font-size: 21px;
  font-weight: 700;
  line-height: 26px;
  white-space: nowrap;
}

.wm-url {
  position: absolute;
  left: 45px;
  top: 26px;
  color: #5cc77a;
  font-size: 17px;
  font-weight: bold;
  line-height: 19px;
  white-space: nowrap;
}

.tray-icons {
  position: absolute;
  left: 1691px;
  top: 999px;
  display: flex;
  gap: 23px;
}

.ime-tray {
  position: absolute;
  left: 1857px;
  top: 987px;
  width: 60px;
  height: 20px;
  padding-left: 5px;
  background-color: #fff;
  border-radius: 5px 5px 0 0;
  color: #333;
  font-size: 13px;
  line-height: 22px;
  white-space: nowrap;
}

.ime-moon {
  font-size: 11px;
}
```
